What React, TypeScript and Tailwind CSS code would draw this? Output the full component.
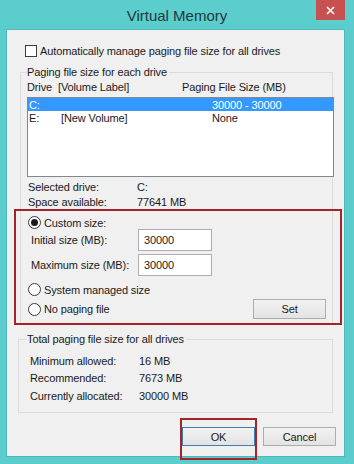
const font = "font-['Liberation_Sans',Arial,sans-serif]"

function Radio({ checked }: { checked?: boolean }) {
  return (
    <span className="flex h-[13px] w-[13px] shrink-0 items-center justify-center rounded-full border border-[#3c3c3c] bg-white">
      {checked && <span className="h-[7px] w-[7px] rounded-full bg-[#1a1a1a]" />}
    </span>
  )
}

function Field({ value }: { value: string }) {
  return (
    <div className="flex h-[22px] w-[74px] items-center border border-[#abadb3] bg-white pl-[5px]">
      {value}
    </div>
  )
}

function Button({ label, primary }: { label: string; primary?: boolean }) {
  return (
    <div
      className={`flex h-[19px] w-[73px] items-center justify-center border bg-gradient-to-b from-[#f2f2f2] to-[#e3e3e3] ${
        primary ? 'border-[#3c7fb1]' : 'border-[#acacac]'
      }`}
    >
      {label}
    </div>
  )
}

export default function App() {
  return (
    <div className={`relative h-[464px] w-[354px] overflow-hidden bg-[#5ccdcd] text-[11px] leading-[14px] tracking-[-0.12px] text-[#1a1a1a] ${font}`}>
      {/* title bar */}
      <div className="flex h-[30px] items-center justify-center pt-[1px] text-[15px] tracking-normal text-[#203a3a]">
        Virtual Memory
      </div>
      <div className="absolute right-[9px] top-0 flex h-[20px] w-[29px] items-center justify-center bg-[#c75050]">
        <svg width="9" height="9" viewBox="0 0 9 9">
          <path d="M1 1 L8 8 M8 1 L1 8" stroke="white" strokeWidth="1.6" />
        </svg>
      </div>

      {/* client area */}
      <div className="relative ml-[7px] mr-[10px] flex h-[426px] flex-col bg-[#f0f0f0] pt-[15px] shadow-[0_0_0_1px_#4fb9b9]">
        <div className="ml-[18px] flex h-[12px] items-center gap-[3px]">
          <span className="h-[12px] w-[12px] border border-[#3c3c3c] bg-white" />
          <span>Automatically manage paging file size for all drives</span>
        </div>

        {/* paging file size for each drive */}
        <div className="ml-[13px] mt-[15px] flex h-[253px] w-[313px] flex-col border border-[#dcdcdc]">
          <span className="-mt-[8px] ml-[6px] w-fit bg-[#f0f0f0] pr-[2px]">Paging file size for each drive</span>
          <div className="ml-[6px] mt-[1px] flex">
            <span className="w-[31px]">Drive</span>
            <span className="w-[124px]">[Volume Label]</span>
            <span>Paging File Size (MB)</span>
          </div>
          <div className="ml-[6px] mt-[3px] flex h-[80px] w-[307px] flex-col border border-[#828790] bg-white">
            <div className="flex h-[13px] items-center bg-[#3399ff] pl-[1px] text-white">
              <span className="w-[32px]">C:</span>
              <span className="w-[151px]"></span>
              <span>30000 - 30000</span>
            </div>
            <div className="flex h-[14px] items-center pl-[1px]">
              <span className="w-[32px]">E:</span>
              <span className="w-[151px]">[New Volume]</span>
              <span>None</span>
            </div>
          </div>
          <div className="ml-[7px] mt-[3px] flex">
            <span className="w-[109px]">Selected drive:</span>
            <span>C:</span>
          </div>
          <div className="ml-[7px] mt-[1px] flex">
            <span className="w-[109px]">Space available:</span>
            <span>77641 MB</span>
          </div>

          <div className="ml-[7px] mt-[7px] flex h-[13px] items-center gap-[3px]">
            <Radio checked />
            <span>Custom size:</span>
          </div>
          <div className="ml-[10px] flex items-center">
            <span className="w-[107px]">Initial size (MB):</span>
            <Field value="30000" />
          </div>
          <div className="ml-[10px] mt-[3px] flex items-center">
            <span className="w-[107px]">Maximum size (MB):</span>
            <Field value="30000" />
          </div>
          <div className="ml-[7px] mt-[7px] flex h-[13px] items-center gap-[3px]">
            <Radio />
            <span>System managed size</span>
          </div>
          <div className="ml-[7px] mr-[6px] mt-[3px] flex h-[20px] items-center">
            <Radio />
            <span className="ml-[3px]">No paging file</span>
            <div className="ml-auto flex h-[20px] w-[73px] items-center justify-center border border-[#acacac] bg-gradient-to-b from-[#f2f2f2] to-[#e3e3e3]">
              Set
            </div>
          </div>
        </div>

        {/* totals */}
        <div className="ml-[11px] mt-[14px] flex h-[74px] w-[315px] flex-col border border-[#dcdcdc]">
          <span className="-mt-[8px] ml-[8px] w-fit bg-[#f0f0f0] pr-[2px]">Total paging file size for all drives</span>
          <div className="ml-[11px] mt-[6px] flex flex-col">
            {[
              ['Minimum allowed:', '16 MB'],
              ['Recommended:', '7673 MB'],
              ['Currently allocated:', '30000 MB'],
            ].map(([k, v]) => (
              <div key={k} className="flex h-[17.5px] items-center">
                <span className="w-[109px]">{k}</span>
                <span>{v}</span>
              </div>
            ))}
          </div>
        </div>

        <div className="mr-[8px] mt-[14px] flex justify-end gap-[8px]">
          <Button label="OK" primary />
          <Button label="Cancel" />
        </div>

        {/* annotation boxes */}
        <div className="absolute left-[7px] top-[179px] h-[116px] w-[328px] border-2 border-[#a3242b]" />
        <div className="absolute left-[173px] top-[388px] h-[42px] w-[77px] border-2 border-[#a3242b]" />
      </div>
    </div>
  )
}
